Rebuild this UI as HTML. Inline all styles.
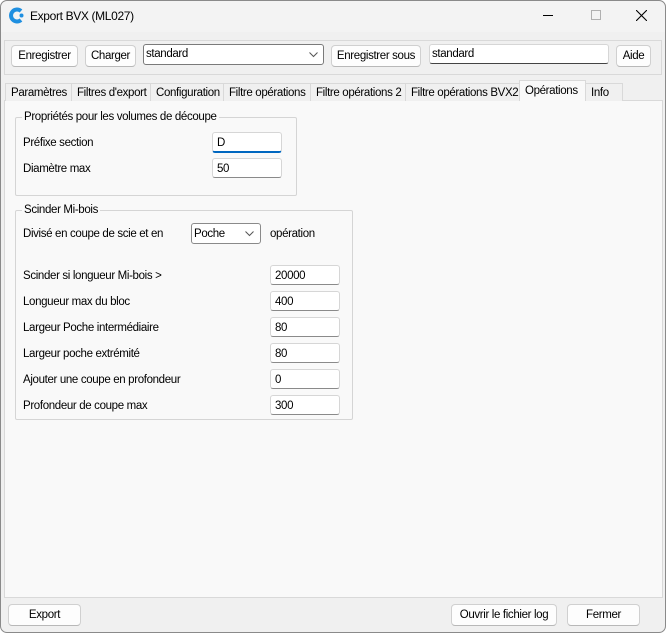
<!DOCTYPE html><html><head><meta charset="utf-8"><style>
*{box-sizing:border-box}
body{margin:0;width:666px;height:633px;overflow:hidden;background:#fff;font-family:"Liberation Sans",sans-serif;font-size:11.5px;color:#000;letter-spacing:-0.35px}
.win{position:absolute;left:0;top:0;width:666px;height:633px;background:#f0f0f0;border-radius:7px;overflow:hidden}
.frame{position:absolute;left:0;top:0;width:666px;height:633px;border:1px solid #8a8a8a;border-radius:7px;z-index:10;pointer-events:none}
.a{position:absolute;white-space:nowrap}
.btn{position:absolute;background:#fdfdfd;border:1px solid #d0d0d0;border-bottom-color:#b8b8b8;border-radius:4px;text-align:center;line-height:21px;white-space:nowrap}
.inp{position:absolute;background:#fff;border:1px solid #d6d6d6;border-bottom-color:#8a8a8a;border-radius:3px;padding-left:4px;line-height:20px;white-space:nowrap}
.tab{position:absolute;top:83px;height:18px;border:1px solid #d9d9d9;border-bottom:none;background:#f0f0f0;line-height:19px;padding-left:5px;white-space:nowrap;overflow:hidden}
.grp{position:absolute;border:1px solid #d5d5d5;border-radius:2px}
.gl{position:absolute;background:#f9f9f9;padding:0 2px;top:-7px;left:6px;white-space:nowrap}
.lb{position:absolute;left:23px;white-space:nowrap}
</style></head><body><div class="win">
<div class="a" style="left:0;top:0;width:666px;height:32px;background:#f3f3f3"></div>
<svg class="a" style="left:8px;top:7px" width="17" height="17" viewBox="0 0 17 17"><path d="M13 4 A6 6 0 1 0 13 13" stroke="#1f8fe0" stroke-width="4" fill="none"/><circle cx="13.5" cy="8.5" r="2" fill="#1f8fe0"/></svg>
<div class="a" style="left:30px;top:9px;font-size:12px">Export BVX (ML027)</div>
<div class="a" style="left:543px;top:15px;width:10px;height:1px;background:#000"></div>
<div class="a" style="left:591px;top:10px;width:10px;height:10px;border:1px solid #b0b0b0"></div>
<svg class="a" style="left:636px;top:10px" width="11" height="11"><path d="M0 0L11 11M11 0L0 11" stroke="#000" stroke-width="1.1"/></svg>
<div class="a" style="left:4px;top:40px;width:658px;height:35px;border:1px solid #d9d9d9;background:#f0f0f0"></div>
<div class="btn" style="left:11px;top:45px;width:67px;height:22px">Enregistrer</div>
<div class="btn" style="left:85px;top:45px;width:51px;height:22px">Charger</div>
<div class="inp" style="left:143px;top:44px;width:181px;height:21px;border-color:#7a7a7a;padding-left:2px;line-height:18px">standard<svg style="position:absolute;right:5px;top:7px" width="9" height="6"><path d="M0.5 0.5L4.5 4.5L8.5 0.5" stroke="#555" fill="none"/></svg></div>
<div class="btn" style="left:331px;top:45px;width:90px;height:22px">Enregistrer sous</div>
<div class="inp" style="left:429px;top:44px;width:180px;height:20px;border-bottom-color:#444;padding-left:2px;line-height:18px">standard</div>
<div class="btn" style="left:616px;top:45px;width:35px;height:22px">Aide</div>
<div class="a" style="left:4px;top:100px;width:659px;height:498px;background:#f9f9f9;border:1px solid #d9d9d9"></div>
<div class="tab" style="left:5px;width:67px">Paramètres</div>
<div class="tab" style="left:71px;width:80px">Filtres d'export</div>
<div class="tab" style="left:150px;width:74px">Configuration</div>
<div class="tab" style="left:223px;width:88px">Filtre opérations</div>
<div class="tab" style="left:310px;width:96px">Filtre opérations 2</div>
<div class="tab" style="left:405px;width:115px">Filtre opérations BVX2</div>
<div class="tab" style="left:519px;top:80px;width:67px;height:21px;background:#f9f9f9;line-height:20px;z-index:2">Opérations</div>
<div class="tab" style="left:585px;width:38px">Info</div>
<div class="grp" style="left:15px;top:117px;width:282px;height:79px"><div class="gl">Propriétés pour les volumes de découpe</div></div>
<div class="lb" style="top:137px">Préfixe section</div>
<div class="inp" style="left:212px;top:132px;width:70px;height:21px;border-bottom:2px solid #0067c0">D</div>
<div class="lb" style="top:163px">Diamètre max</div>
<div class="inp" style="left:212px;top:158px;width:70px;height:20px">50</div>
<div class="grp" style="left:15px;top:210px;width:338px;height:210px"><div class="gl">Scinder Mi-bois</div></div>
<div class="lb" style="top:228px">Divisé en coupe de scie et en</div>
<div class="inp" style="left:191px;top:223px;width:70px;height:21px;border-color:#8a8a8a;padding-left:2px">Poche<svg style="position:absolute;right:6px;top:7px" width="9" height="6"><path d="M0.5 0.5L4.5 4.5L8.5 0.5" stroke="#555" fill="none"/></svg></div>
<div class="a" style="left:270px;top:228px">opération</div>
<div class="lb" style="top:270px">Scinder si longueur Mi-bois &gt;</div><div class="inp" style="left:270px;top:265px;width:70px;height:20px">20000</div>
<div class="lb" style="top:296px">Longueur max du bloc</div><div class="inp" style="left:270px;top:291px;width:70px;height:20px">400</div>
<div class="lb" style="top:322px">Largeur Poche intermédiaire</div><div class="inp" style="left:270px;top:317px;width:70px;height:20px">80</div>
<div class="lb" style="top:348px">Largeur poche extrémité</div><div class="inp" style="left:270px;top:343px;width:70px;height:20px">80</div>
<div class="lb" style="top:374px">Ajouter une coupe en profondeur</div><div class="inp" style="left:270px;top:369px;width:70px;height:20px">0</div>
<div class="lb" style="top:400px">Profondeur de coupe max</div><div class="inp" style="left:270px;top:395px;width:70px;height:20px">300</div>
<div class="btn" style="left:8px;top:604px;width:73px;height:22px">Export</div>
<div class="btn" style="left:451px;top:604px;width:106px;height:22px">Ouvrir le fichier log</div>
<div class="btn" style="left:567px;top:604px;width:73px;height:22px">Fermer</div>
</div><div class="frame"></div></body></html>
